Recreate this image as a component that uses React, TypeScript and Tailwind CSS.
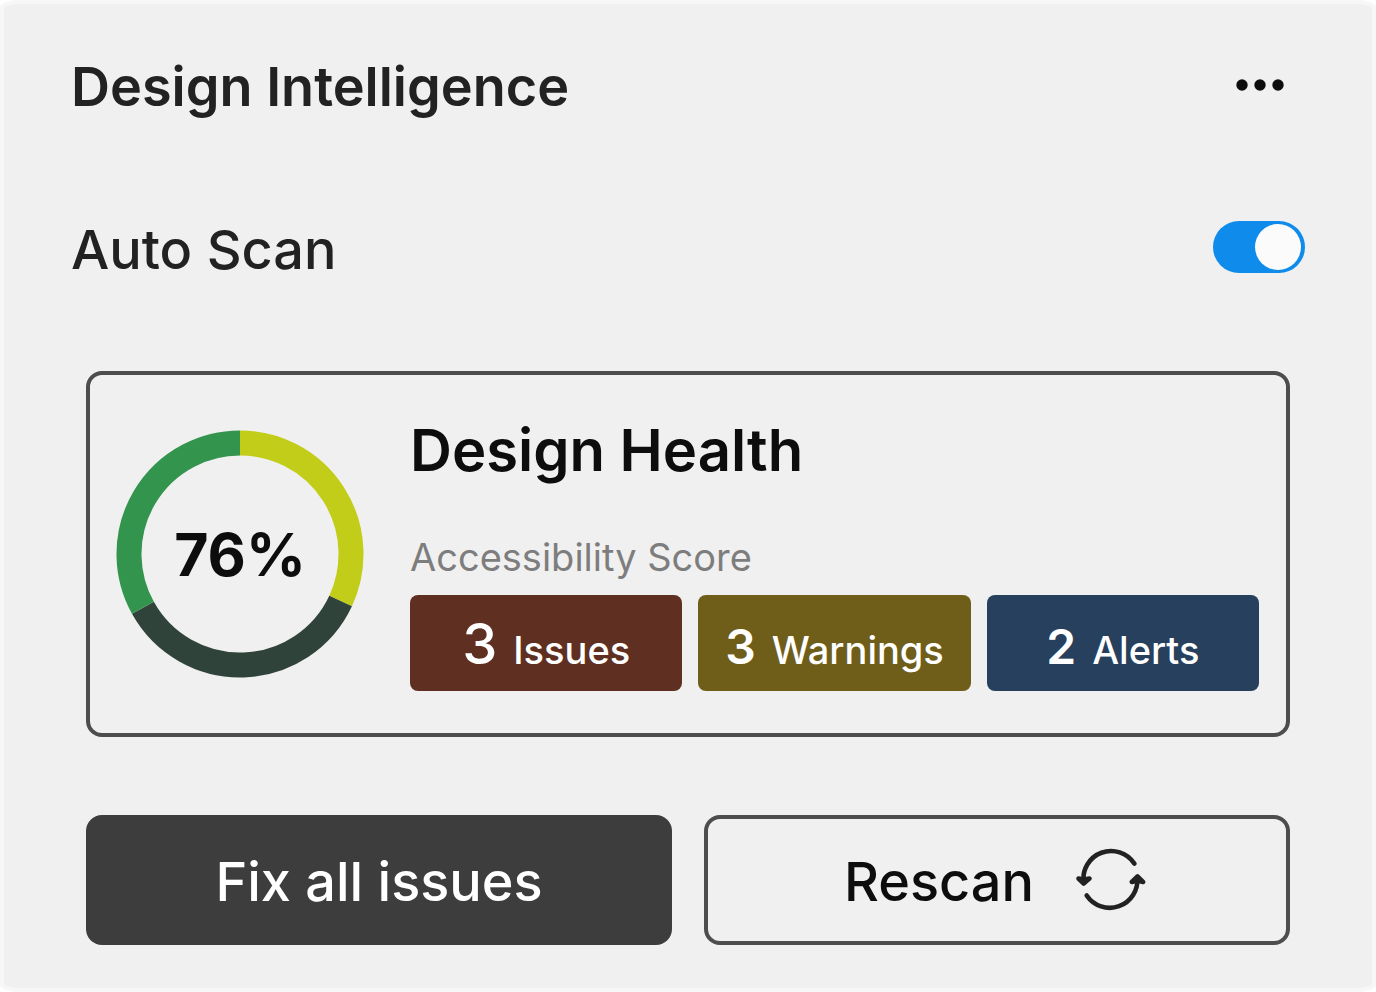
import { useState } from "react";

const SEGMENTS = [
  { name: "good", color: "#c1cd18", from: 0, to: 115 },
  { name: "rest", color: "#2f433b", from: 115, to: 241 },
  { name: "great", color: "#32944d", from: 241, to: 360 },
];

const STATS = [
  {
    label: "Issues",
    count: 3,
    tile: "bg-[#5f3022]",
    number: "text-[56px] font-medium",
  },
  {
    label: "Warnings",
    count: 3,
    tile: "bg-[#6f5d1a]",
    number: "text-[48px] font-semibold",
  },
  {
    label: "Alerts",
    count: 2,
    tile: "bg-[#26405d]",
    number: "text-[48px] font-semibold",
  },
];

export default function App() {
  const [autoScan, setAutoScan] = useState(true);

  return (
    <div className="min-h-screen bg-white font-['Inter',sans-serif]">
      <main className="flex min-h-screen flex-col rounded-[20px/8px] border-4 border-[#f7f7f7] bg-[#f0f0f0] px-[67px] pt-[51px] pb-[42px]">
        <header className="flex items-center justify-between">
          <h1 className="text-[54px] leading-[64px] font-semibold text-[#222]">
            Design Intelligence
          </h1>
          <button type="button" aria-label="More options" className="mr-[21px]">
            <svg width="48" height="16" viewBox="0 0 48 16" fill="#0d0d0d">
              <circle cx="6" cy="6" r="5.7" />
              <circle cx="24" cy="6" r="5.7" />
              <circle cx="42" cy="6" r="5.7" />
            </svg>
          </button>
        </header>

        <div className="mt-[98px] flex items-start justify-between">
          <label
            htmlFor="auto-scan"
            className="text-[54px] leading-[66px] font-medium text-[#222]"
          >
            Auto Scan
          </label>
          <input
            id="auto-scan"
            type="checkbox"
            role="switch"
            checked={autoScan}
            onChange={(e) => setAutoScan(e.target.checked)}
            className="mt-1 flex h-[52px] w-[92px] cursor-pointer appearance-none items-center rounded-full bg-[#9a9a9a] px-1 before:size-[46px] before:rounded-full before:bg-[#fbfbfb] checked:justify-end checked:bg-[#0f8ceb]"
          />
        </div>

        <section className="mx-[15px] mt-[88px] flex items-center gap-[46px] rounded-2xl border-4 border-[#4d4d4d] pt-[42px] pr-[27px] pb-[42px] pl-[26px]">
          <HealthRing score={76} />
          <div className="min-w-0 flex-1">
            <h2 className="text-[58px] leading-[66px] font-semibold text-[#0d0d0d]">
              Design Health
            </h2>
            <p className="mt-[50px] text-[38px] leading-[48px] text-[#7d7d7d]">
              Accessibility Score
            </p>
            <div className="mt-[14px] grid grid-cols-3 gap-4">
              {STATS.map((stat) => (
                <div
                  key={stat.label}
                  className={`flex h-24 items-baseline justify-center gap-4 rounded-lg pt-2.5 text-white ${stat.tile}`}
                >
                  <span className={`leading-none ${stat.number}`}>
                    {stat.count}
                  </span>
                  <span className="text-[38px] leading-[90px] font-medium">
                    {stat.label}
                  </span>
                </div>
              ))}
            </div>
          </div>
        </section>

        <div className="mx-[15px] mt-[78px] grid grid-cols-2 gap-8">
          <button
            type="button"
            className="h-[130px] rounded-2xl bg-[#3d3d3d] pt-0.5 text-[54px] font-medium text-white"
          >
            Fix all issues
          </button>
          <button
            type="button"
            className="flex h-[130px] items-center justify-center gap-10 rounded-2xl border-4 border-[#4d4d4d] pt-0.5 pr-1 text-[54px] font-medium text-[#0d0d0d]"
          >
            Rescan
            <RescanIcon />
          </button>
        </div>
      </main>
    </div>
  );
}

function point(angle: number, r: number) {
  const rad = (angle * Math.PI) / 180;
  return `${124 + r * Math.sin(rad)} ${124 - r * Math.cos(rad)}`;
}

function HealthRing({ score }: { score: number }) {
  return (
    <div className="relative size-[248px] shrink-0">
      <svg viewBox="0 0 248 248" className="size-full" fill="none">
        {SEGMENTS.map((s) => (
          <path
            key={s.name}
            d={`M${point(s.from, 111)}A111 111 0 0 1 ${point(s.to, 111)}`}
            stroke={s.color}
            strokeWidth="25"
          />
        ))}
      </svg>
      <div className="absolute inset-0 flex items-center justify-center text-[59px] leading-none font-bold text-[#0d0d0d]">
        {score}%
      </div>
    </div>
  );
}

function RescanIcon() {
  return (
    <svg
      width="72"
      height="66"
      viewBox="0 0 72 66"
      fill="none"
      stroke="#222"
      strokeWidth="4.6"
      strokeLinecap="round"
      strokeLinejoin="round"
    >
      <path d="M60.3 15.500A27.700 27.700 0 0 0 9.700 34.500" />
      <path d="M4.500 30.500L9.700 35.500L15.500 30.500L9.700 31.500Z" fill="#222" />
      <path d="M12.700 47.500A27.700 27.700 0 0 0 63.300 29.500" />
      <path d="M57.800 34L63.500 28.500L69 34L63.300 32.500Z" fill="#222" />
    </svg>
  );
}
